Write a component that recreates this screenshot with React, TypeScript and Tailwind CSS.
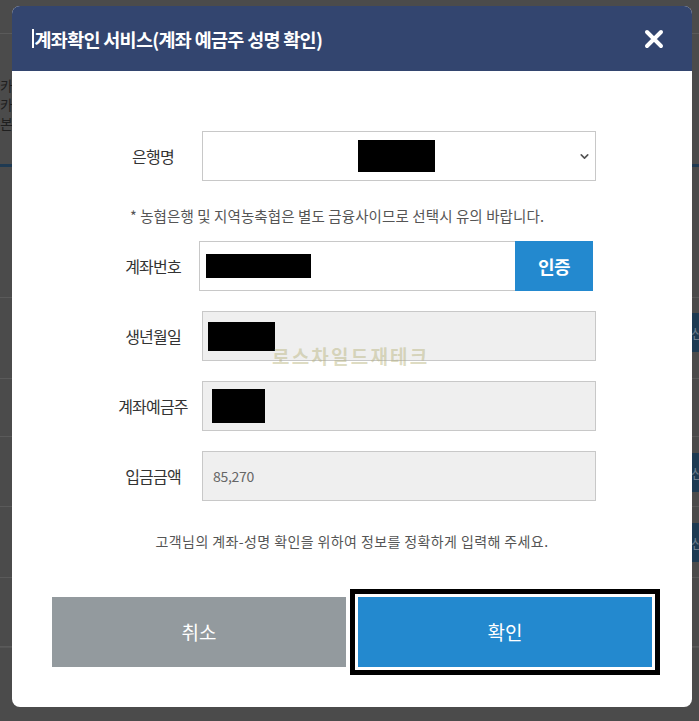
import { ChevronDown } from 'lucide-react'

const kr = "font-['Noto_Sans_CJK_KR',sans-serif]"

function Redacted({ w, h }: { w: number; h: number }) {
  return <div className="bg-black" style={{ width: w, height: h }} />
}

function Row({ label, children }: { label: string; children: React.ReactNode }) {
  return (
    <div className="flex h-[50px] items-center">
      <div className="w-[98px] text-center text-[16px] leading-[20px] tracking-[-0.8px] text-[#333]">{label}</div>
      {children}
    </div>
  )
}

function Backdrop() {
  return (
    <div className="flex h-[721px] w-[699px] flex-col bg-[#4b4b4b] text-[#1f1f1f]">
      <div className="h-[34px] border-b border-[#5a5a5a]" />
      <div className="flex h-[130px] flex-col gap-[1px] pt-[42px] text-[14px] leading-[18px]">
        <span>카카오페이</span>
        <span>카드결제</span>
        <span>본인확인</span>
      </div>
      <div className="h-[3px] bg-[#1f3a52]" />
      <div className="h-[131px] border-b border-[#5a5a5a]" />
      <div className="flex h-[81px] items-start border-b border-[#5a5a5a] pt-[15px]">
        <div className="ml-auto flex h-[39px] w-[60px] items-center whitespace-nowrap bg-[#1d3a52] pl-[52px] text-[13px] text-[#6c7d8c]">신청</div>
      </div>
      <div className="h-[58px] border-b border-[#5a5a5a]" />
      <div className="flex h-[70px] items-start border-b border-[#5a5a5a] pt-[16px]">
        <div className="ml-auto flex h-[39px] w-[60px] items-center whitespace-nowrap bg-[#1d3a52] pl-[52px] text-[13px] text-[#6c7d8c]">신청</div>
      </div>
      <div className="flex h-[71px] items-start border-b border-[#5a5a5a] pt-[16px]">
        <div className="ml-auto flex h-[39px] w-[60px] items-center whitespace-nowrap bg-[#1d3a52] pl-[52px] text-[13px] text-[#6c7d8c]">신청</div>
      </div>
      <div className="h-[69px] border-b border-[#5a5a5a]" />
      <div className="flex-1 border-t border-[#555]" />
    </div>
  )
}

export default function App() {
  return (
    <div className={`relative h-[721px] w-[699px] overflow-hidden ${kr}`}>
      <Backdrop />

      <div className="absolute left-[12px] top-[6px] h-[701px] w-[680px] overflow-hidden rounded-[8px] bg-white">
        <div className="flex h-[65px] items-center justify-between bg-[#33456f] pl-[20px] pr-[28px]">
          <div className="flex items-center">
            <span className="mr-[1px] h-[19px] w-[1.5px] bg-white" />
            <h1 className="text-[18.5px] font-bold leading-[24px] tracking-[-0.7px] text-white">
              계좌확인 서비스(계좌 예금주 성명 확인)
            </h1>
          </div>
          <svg width="20" height="20" viewBox="0 0 20 20">
            <path d="M3 3 L17 17 M17 3 L3 17" stroke="white" strokeWidth="4" strokeLinecap="round" />
          </svg>
        </div>

        <div className="pl-[92px] pr-[96px] pt-[60px]">
          <Row label="은행명">
            <div className="flex h-[50px] flex-1 items-center border border-[#c8c8c8] pr-[4px]">
              <div className="flex flex-1 justify-center pl-[12px]">
                <Redacted w={77} h={32} />
              </div>
              <ChevronDown size={13} strokeWidth={3} className="text-[#555]" />
            </div>
          </Row>

          <div className="flex h-[60px] items-center justify-center whitespace-nowrap pr-[26px] pt-[10px] text-[14.5px] leading-[20px] tracking-[0.1px] text-[#555]">
            * 농협은행 및 지역농축협은 별도 금융사이므로 선택시 유의 바랍니다.
          </div>

          <div className="flex flex-col gap-[20px]">
            <Row label="계좌번호">
              <div className="-ml-[3px] mr-[3px] flex h-[50px] flex-1">
                <div className="flex flex-1 items-center border border-[#c8c8c8] border-r-0 pl-[6px]">
                  <Redacted w={105} h={24} />
                </div>
                <button className="w-[78px] bg-[#2389cf] text-[18px] font-bold tracking-[-0.5px] text-white">인증</button>
              </div>
            </Row>
            <Row label="생년월일">
              <div className="flex h-[50px] flex-1 items-center border border-[#c8c8c8] bg-[#efefef] pl-[5px]">
                <Redacted w={67} h={29} />
              </div>
            </Row>
            <Row label="계좌예금주">
              <div className="flex h-[50px] flex-1 items-center border border-[#c8c8c8] bg-[#efefef] pl-[9px]">
                <Redacted w={53} h={34} />
              </div>
            </Row>
            <Row label="입금금액">
              <div className="flex h-[50px] flex-1 items-center border border-[#c8c8c8] bg-[#efefef] pl-[10px] text-[14px] tracking-[-0.3px] text-[#666]">
                85,270
              </div>
            </Row>
          </div>
        </div>

        <p className="mt-[30px] whitespace-nowrap text-center text-[14px] leading-[20px] tracking-[0.4px] text-[#555]">
          고객님의 계좌-성명 확인을 위하여 정보를 정확하게 입력해 주세요.
        </p>

        <div className="mt-[46px] flex gap-[12px] px-[40px]">
          <button className="h-[70px] flex-1 bg-[#939a9e] text-[19px] text-white">취소</button>
          <button className="h-[70px] flex-1 bg-[#2389cf] text-[19px] text-white outline-solid outline-[5px] outline-offset-[3px] outline-black">
            확인
          </button>
        </div>

        <div className="pointer-events-none absolute left-[260px] top-[337px] text-[19px] font-bold leading-[26px] tracking-[2.2px] text-[rgba(180,176,120,0.45)]">
          로스차일드재테크
        </div>
      </div>
    </div>
  )
}
